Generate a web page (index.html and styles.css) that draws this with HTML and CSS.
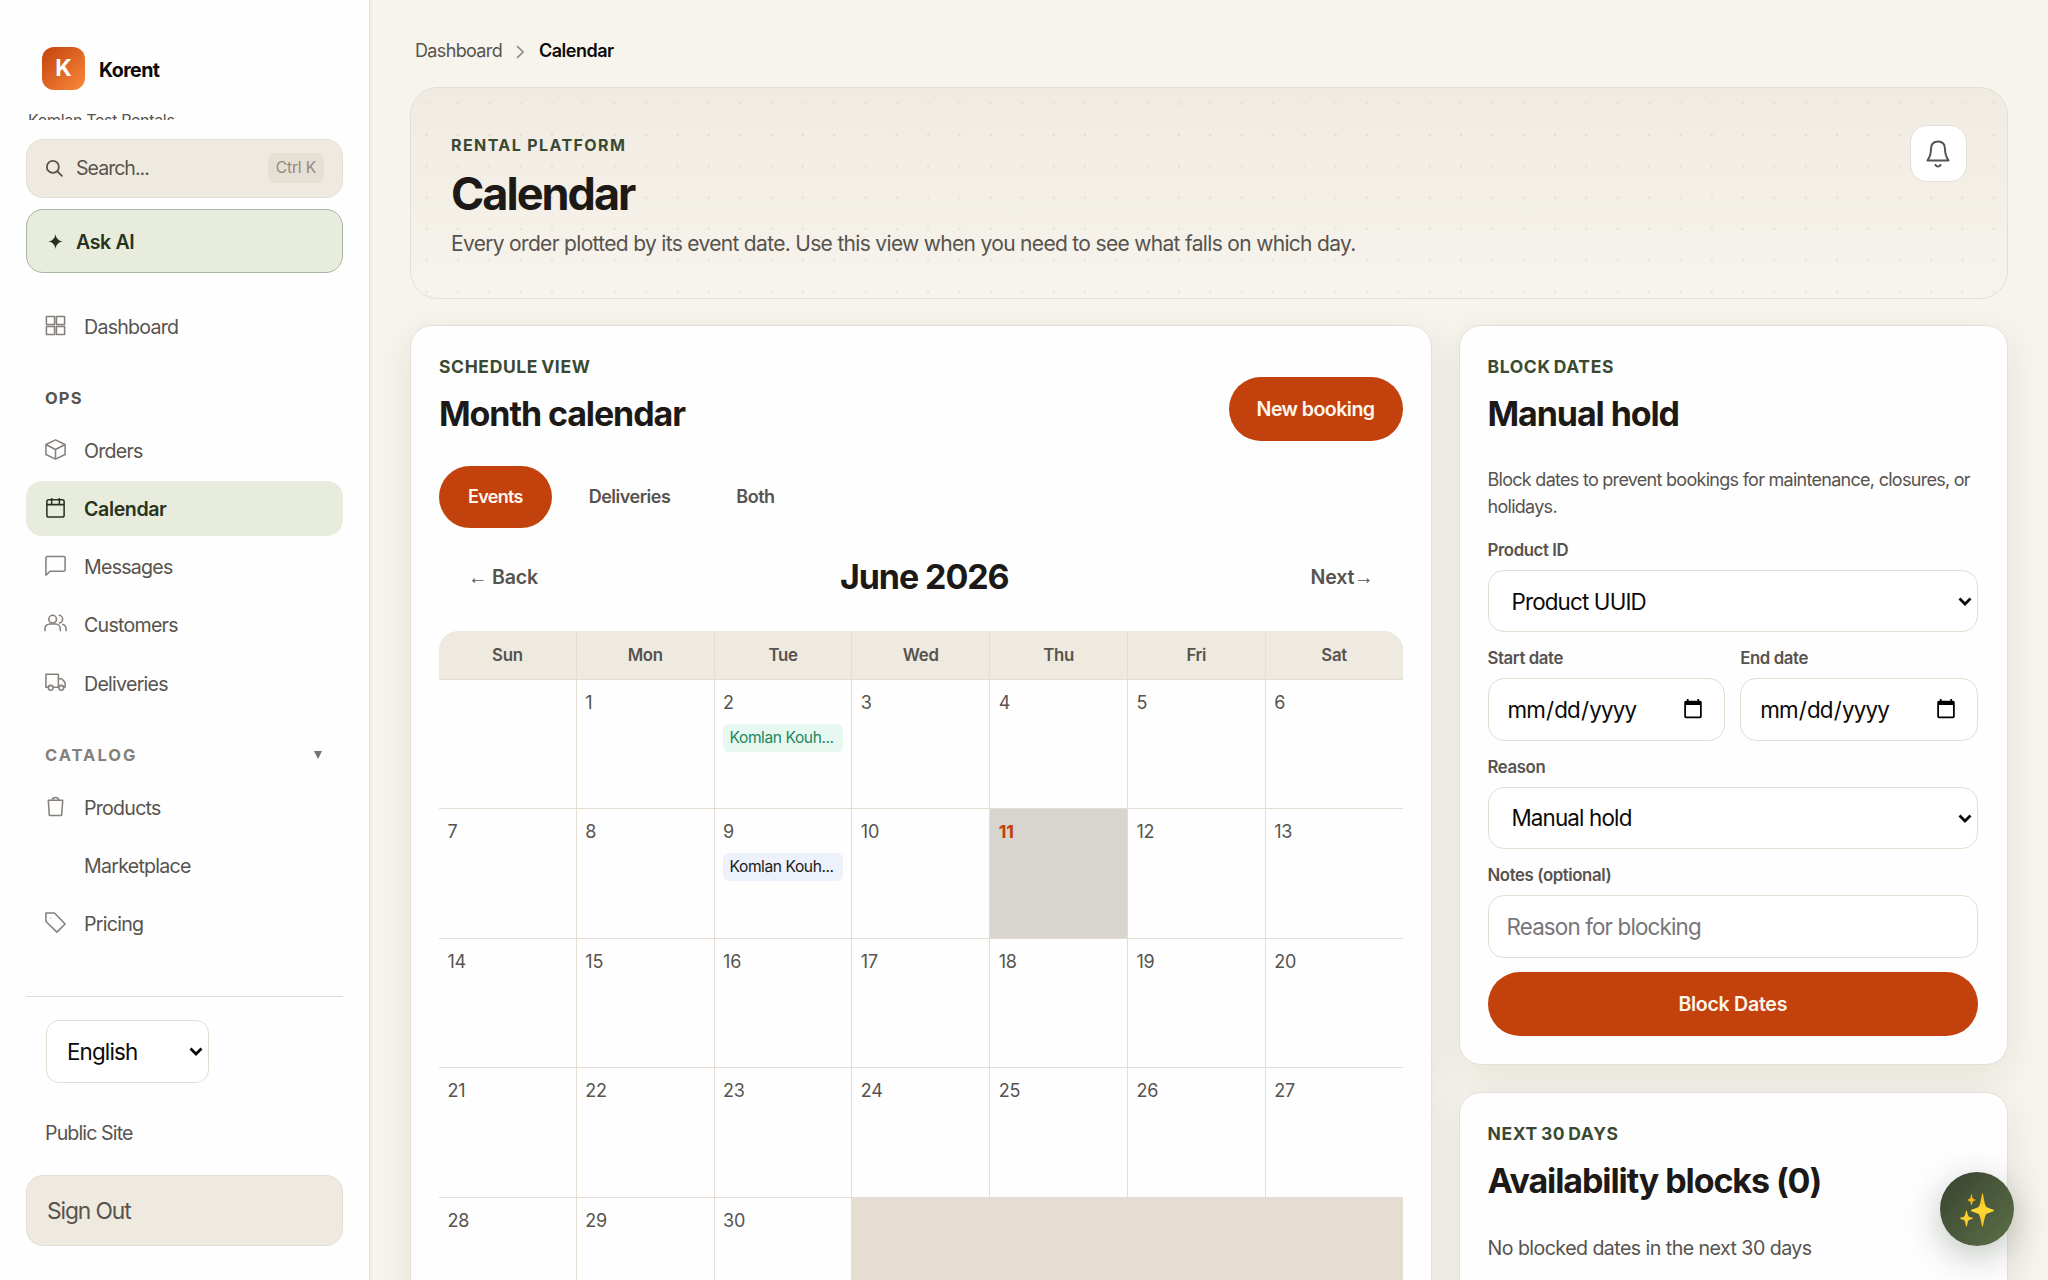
FILE: index.html
```html
<!DOCTYPE html>
<html lang="en">
<head>
  <meta charset="utf-8">
  <title>Calendar - Korent</title>
  <link rel="stylesheet" href="styles.css">
</head>
<body>
  <div class="app">
    <!-- Sidebar -->
    <aside class="sidebar">
      <div class="brand-block">
        <div class="brand">
          <span class="brand-logo">K</span>
          <span class="brand-name">Korent</span>
        </div>
        <div class="org-name">Komlan Test Rentals</div>
      </div>

      <button class="search">
        <svg class="search-icon" viewBox="0 0 24 24"><circle cx="10.5" cy="10.5" r="8"/><path d="M16.5 16.5L22.5 22.5"/></svg>
        <span>Search...</span>
        <kbd>Ctrl K</kbd>
      </button>
      <button class="ask-ai">
        <svg class="spark" viewBox="0 0 16 16"><path d="M8 0C8.6 4.6 11 7.3 16 8C11 8.7 8.6 11.4 8 16C7.4 11.4 5 8.7 0 8C5 7.3 7.4 4.6 8 0Z"/></svg>
        <span>Ask AI</span>
      </button>

      <nav class="nav">
        <a class="nav-item" href="#">
          <svg class="icon" viewBox="0 0 24 24"><path d="M2.500 2.500h8.500v8.500H2.500zM13 2.500h8.500v8.500H13zM2.500 13h8.500v8.500H2.500zM13 13h8.500v8.500H13z"/></svg>
          <span>Dashboard</span>
        </a>

        <div class="nav-title">Ops</div>
        <a class="nav-item" href="#">
          <svg class="icon" viewBox="0 0 24 24"><path d="M12 2l10 4.800v10.400L12 22l-10-4.800V6.800zM2 6.800L12 12l10-5.200M12 12v10"/></svg>
          <span>Orders</span>
        </a>
        <a class="nav-item active" href="#">
          <svg class="icon" viewBox="0 0 24 24"><rect x="3" y="4" width="18" height="18" rx="2"/><path d="M3 9h18M8 2v6M16 2v6"/></svg>
          <span>Calendar</span>
        </a>
        <a class="nav-item" href="#">
          <svg class="icon" viewBox="0 0 24 24"><path d="M3.500 2.500h17a1.500 1.500 0 0 1 1.500 1.500v12.500A1.500 1.500 0 0 1 20.500 18H6.500l-4.500 4V4A1.500 1.500 0 0 1 3.500 2.500z"/></svg>
          <span>Messages</span>
        </a>
        <a class="nav-item" href="#">
          <svg class="icon" viewBox="0 0 24 24"><circle cx="9" cy="7.500" r="4"/><path d="M1 20v-2.500a5 5 0 0 1 5-5h6a5 5 0 0 1 5 5V20M15.500 3.500a4 4 0 0 1 0 8M19 12.700a5 5 0 0 1 4 5V20"/></svg>
          <span>Customers</span>
        </a>
        <a class="nav-item" href="#">
          <svg class="icon" viewBox="0 0 24 24"><path d="M4.500 17H2V3.500h13V17H9.500M15 8h3.500l3.500 4v5h-1.500M15 17h.5"/><circle cx="7" cy="17.500" r="2.500"/><circle cx="18" cy="17.500" r="2.500"/></svg>
          <span>Deliveries</span>
        </a>

        <div class="nav-title collapsible">Catalog <svg class="caret" viewBox="0 0 8 8"><path d="M0 0h8L4 8z"/></svg></div>
        <a class="nav-item" href="#">
          <svg class="icon" viewBox="0 0 24 24"><path d="M4.500 5.500h15l-1 15a1 1 0 0 1-1 1h-11a1 1 0 0 1-1-1zM8.500 5.500C8.500 1.500 15.500 1.500 15.500 5.500"/></svg>
          <span>Products</span>
        </a>
        <a class="nav-item" href="#">
          <svg class="icon" viewBox="0 0 24 24"></svg>
          <span>Marketplace</span>
        </a>
        <a class="nav-item" href="#">
          <svg class="icon" viewBox="0 0 24 24"><path d="M2 2h9L22 13.500L13.500 22L2 11zM7 7.500h.6"/></svg>
          <span>Pricing</span>
        </a>
      </nav>

      <div class="sidebar-footer">
        <div class="select language">
          <select class="field"><option>English</option></select>
          <svg viewBox="0 0 14 10"><path d="M1.500 1.500L7 7l5.500-5.500"/></svg>
        </div>
        <a class="public-site" href="#">Public Site</a>
        <button class="sign-out">Sign Out</button>
      </div>
    </aside>

    <!-- Page content -->
    <main class="main">
      <div class="breadcrumb">
        <a href="#">Dashboard</a>
        <svg class="chevron" viewBox="0 0 8 14"><path d="M1 1l6 6-6 6"/></svg>
        <strong>Calendar</strong>
      </div>

      <header class="hero">
        <div>
          <div class="hero-eyebrow">Rental platform</div>
          <h1>Calendar</h1>
          <p>Every order plotted by its event date. Use this view when you need to see what falls on which day.</p>
        </div>
        <button class="bell">
          <svg viewBox="0 0 24 28"><path d="M12 1.500c-4.500 0-7 3-7 7.500 0 6-1.500 8.500-3.500 11.500h21c-2-3-3.500-5.500-3.500-11.500 0-4.500-2.500-7.500-7-7.500zM9.500 25c1 2 4 2 5 0"/></svg>
        </button>
      </header>

      <div class="columns">
        <section class="card">
          <div class="card-head">
            <div>
              <div class="eyebrow">Schedule view</div>
              <h2>Month calendar</h2>
            </div>
            <button class="btn booking">New booking</button>
          </div>

          <div class="tabs">
            <button class="tab selected">Events</button>
            <button class="tab">Deliveries</button>
            <button class="tab">Both</button>
          </div>

          <div class="month-nav">
            <button class="month-btn"><span class="arrow">←</span> Back</button>
            <h2>June 2026</h2>
            <button class="month-btn">Next<span class="arrow">→</span></button>
          </div>

          <div class="month">
            <div class="weekday">Sun</div>
            <div class="weekday">Mon</div>
            <div class="weekday">Tue</div>
            <div class="weekday">Wed</div>
            <div class="weekday">Thu</div>
            <div class="weekday">Fri</div>
            <div class="weekday">Sat</div>

            <div class="day"></div>
            <div class="day">1</div>
            <div class="day">2<div class="event confirmed">Komlan Kouh...</div></div>
            <div class="day">3</div>
            <div class="day">4</div>
            <div class="day">5</div>
            <div class="day">6</div>

            <div class="day">7</div>
            <div class="day">8</div>
            <div class="day">9<div class="event">Komlan Kouh...</div></div>
            <div class="day">10</div>
            <div class="day today">11</div>
            <div class="day">12</div>
            <div class="day">13</div>

            <div class="day">14</div>
            <div class="day">15</div>
            <div class="day">16</div>
            <div class="day">17</div>
            <div class="day">18</div>
            <div class="day">19</div>
            <div class="day">20</div>

            <div class="day">21</div>
            <div class="day">22</div>
            <div class="day">23</div>
            <div class="day">24</div>
            <div class="day">25</div>
            <div class="day">26</div>
            <div class="day">27</div>

            <div class="day">28</div>
            <div class="day">29</div>
            <div class="day">30</div>
          </div>
        </section>

        <div class="side">
          <section class="card">
            <div class="eyebrow">Block dates</div>
            <h2>Manual hold</h2>
            <p class="hint">Block dates to prevent bookings for maintenance, closures, or holidays.</p>

            <form class="hold-form">
              <label>Product ID
                <div class="select">
                  <select class="field"><option>Product UUID</option></select>
                  <svg viewBox="0 0 14 10"><path d="M1.500 1.500L7 7l5.500-5.500"/></svg>
                </div>
              </label>
              <div class="date-row">
                <label>Start date
                  <input class="field" type="date">
                </label>
                <label>End date
                  <input class="field" type="date">
                </label>
              </div>
              <label>Reason
                <div class="select">
                  <select class="field"><option>Manual hold</option></select>
                  <svg viewBox="0 0 14 10"><path d="M1.500 1.500L7 7l5.500-5.500"/></svg>
                </div>
              </label>
              <label>Notes (optional)
                <input class="field" type="text" placeholder="Reason for blocking">
              </label>
              <button class="btn" type="button">Block Dates</button>
            </form>
          </section>

          <section class="card">
            <div class="eyebrow">Next 30 days</div>
            <h2>Availability blocks (0)</h2>
            <p class="empty">No blocked dates in the next 30 days</p>
          </section>
        </div>
      </div>
    </main>
  </div>

  <!-- Floating assistant button -->
  <button class="fab">
    <svg viewBox="0 0 36 38">
      <defs>
        <linearGradient id="gold" x1="0" y1="0" x2="0" y2="1">
          <stop offset="0" stop-color="#f5b800"/>
          <stop offset="0.5" stop-color="#fdd835"/>
          <stop offset="1" stop-color="#f9c01c"/>
        </linearGradient>
      </defs>
      <path fill="url(#gold)" d="M23.500 2C24.300 2 25 12 27 15.500C29 17.500 35 18.200 35 19.500C35 20.800 29 21.500 27 23.500C25 27 24.300 36 23.500 36C22.700 36 22 27 20 23.500C18 21.500 12 20.800 12 19.500C12 18.200 18 17.500 20 15.500C22 12 22.700 2 23.500 2Z"/>
      <path fill="#fbcf30" d="M7.500 19.500C8.300 19.500 8.500 24 9.500 25.200C10.700 26.200 14 26.500 14 27.300C14 28.100 10.700 28.500 9.500 29.500C8.500 30.800 8.300 35.500 7.500 35.500C6.700 35.500 6.500 30.800 5.500 29.500C4.300 28.500 1 28.100 1 27.300C1 26.500 4.300 26.200 5.500 25.200C6.500 24 6.700 19.500 7.500 19.500Z"/>
      <path fill="#f2b51d" d="M12.500 3C13 3 13.200 6.500 14 7.500C14.800 8.200 16.500 8.300 16.500 9C16.500 9.700 14.800 9.800 14 10.500C13.200 11.500 13 14.500 12.500 14.500C12 14.500 11.800 11.500 11 10.500C10.200 9.800 8.500 9.700 8.500 9C8.500 8.300 10.200 8.200 11 7.500C11.800 6.500 12 3 12.500 3Z"/>
    </svg>
  </button>
</body>
</html>
```

FILE: styles.css
```css
* {
  box-sizing: border-box;
}

body {
  margin: 0;
  height: 1280px;
  overflow: hidden;
  font-family: Inter, "Liberation Sans", sans-serif;
  font-size: 19.6px;
  letter-spacing: -0.011em;
  color: #1c1917;
  background-color: #f7f4ed;
}

h1, h2, p {
  margin: 0;
}

a {
  color: inherit;
  text-decoration: none;
}

button {
  font: inherit;
  letter-spacing: inherit;
  border: none;
  cursor: pointer;
}

.app {
  display: flex;
  height: 1280px;
  overflow: hidden;
}

/* Sidebar */
.sidebar {
  display: flex;
  flex-direction: column;
  flex: none;
  width: 370px;
  height: 1280px;
  padding: 0 26px 34px;
  background-color: #fefefe;
  border-right: 1px solid #e5e0d6;
  box-shadow: 1px 0 3px rgba(60, 50, 30, 0.06);
}

.brand-block {
  flex: none;
  height: 120px;
  padding-top: 47px;
  overflow: hidden;
}

.brand {
  display: flex;
  align-items: center;
  gap: 14px;
  height: 43px;
  padding-left: 16px;
}

.brand-logo {
  width: 43px;
  height: 43px;
  border-radius: 12px;
  background: linear-gradient(135deg, #c2410c, #fb8a3c);
  color: #fff;
  font-size: 23px;
  font-weight: 700;
  line-height: 43px;
  text-align: center;
}

.brand-name {
  padding-top: 2px;
  color: #0c0a09;
  font-weight: 700;
  letter-spacing: -0.03em;
}

.org-name {
  margin-top: 18px;
  padding-left: 2px;
  color: #57534e;
  font-size: 16px;
  letter-spacing: -0.02em;
  line-height: 24px;
}

.search,
.ask-ai {
  display: flex;
  flex: none;
  align-items: center;
  width: 317px;
  padding: 0 18px;
  border-radius: 17px;
  text-align: left;
}

.search {
  height: 59px;
  margin-top: 19px;
  padding-bottom: 1px;
  border: 1px solid #e5dfd3;
  background-color: #efeae0;
  color: #57534e;
  letter-spacing: -0.052em;
}

.search-icon {
  width: 18px;
  height: 18px;
  margin-right: 13px;
  fill: none;
  stroke: #57534e;
  stroke-width: 2.4;
  stroke-linecap: round;
}

.search kbd {
  margin-left: auto;
  padding: 0 8px;
  border-radius: 8px;
  background-color: #e6dfd3;
  color: #8f8a84;
  font-family: inherit;
  font-size: 15.6px;
  letter-spacing: -0.011em;
  line-height: 30px;
}

.ask-ai {
  height: 64px;
  margin-top: 11px;
  padding: 1px 0 0 21px;
  border: 1px solid #a9b8a2;
  background-color: #e8ecdc;
  color: #28331f;
  font-weight: 600;
  letter-spacing: -0.02em;
}

.spark {
  width: 15px;
  height: 15px;
  margin-right: 13px;
  fill: #28331f;
}

.nav {
  margin-top: 26px;
}

.nav-item {
  display: flex;
  align-items: center;
  height: 55px;
  margin-bottom: 3.3px;
  padding-left: 18px;
  border-radius: 16px;
  color: #57534e;
  letter-spacing: -0.038em;
}

.nav-item.active {
  background-color: #e8ecdc;
  color: #28331f;
  font-weight: 600;
  letter-spacing: -0.02em;
}

.icon {
  width: 23px;
  height: 23px;
  margin: -3px 17px 0 0;
  fill: none;
  stroke: #85807a;
  stroke-width: 1.6;
  stroke-linejoin: round;
}

.active .icon {
  stroke: #28331f;
}

.nav-title {
  display: flex;
  align-items: center;
  justify-content: space-between;
  height: 20px;
  margin: 34px 20px 15px 19px;
  color: #57534e;
  font-size: 16.5px;
  font-weight: 700;
  letter-spacing: 0.07em;
  text-transform: uppercase;
}

.nav-title.collapsible {
  color: #85807a;
  letter-spacing: 0.12em;
}

.caret {
  width: 8px;
  height: 8px;
  margin-right: 1px;
  fill: #78716c;
}

.sidebar-footer {
  display: flex;
  flex-direction: column;
  align-items: flex-start;
  margin-top: auto;
  padding-top: 23px;
  border-top: 1px solid #e2ddd3;
}

.field {
  display: block;
  width: 100%;
  height: 62.6px;
  padding: 0 18px;
  border: 1px solid #e2ddd0;
  border-radius: 16px;
  background-color: #fff;
  color: #0c0a09;
  font-family: inherit;
  font-size: 22.4px;
  font-weight: 400;
  letter-spacing: -0.038em;
}

.field::placeholder {
  color: #78757a;
}

/* Select with its own arrow */
.select {
  position: relative;
}

.select .field {
  padding: 0 23px;
  appearance: none;
}

.select svg {
  position: absolute;
  top: 27px;
  right: 6px;
  width: 14px;
  height: 10px;
  fill: none;
  stroke: #0c0a09;
  stroke-width: 2.8;
  pointer-events: none;
}

.language {
  width: 163px;
  margin-left: 20px;
}

.language .field {
  padding: 0 20px;
  border-radius: 13px;
}

.public-site {
  height: 40px;
  margin: 30px 0 22px 19px;
  color: #57534e;
  letter-spacing: -0.045em;
  line-height: 40px;
}

.sign-out {
  width: 317px;
  height: 71px;
  padding: 0 20px;
  border: 1px solid #e5dfd3;
  border-radius: 17px;
  background-color: #efeae0;
  color: #57534e;
  font-size: 22.8px;
  letter-spacing: -0.048em;
  text-align: left;
}

/* Main area */
.main {
  flex: 1;
  padding: 0 40px;
}

.breadcrumb {
  display: flex;
  align-items: center;
  height: 87px;
  padding: 14px 0 0 5px;
  color: #57534e;
  font-size: 18px;
  letter-spacing: -0.036em;
}

.breadcrumb strong {
  color: #0c0a09;
  font-weight: 600;
  letter-spacing: -0.028em;
}

.chevron {
  width: 8px;
  height: 14px;
  margin: 2px 15px 0 14px;
  fill: none;
  stroke: #8f8a84;
  stroke-width: 1.6;
}

.hero {
  display: flex;
  justify-content: space-between;
  height: 211.5px;
  padding: 38px 40px 0;
  border: 1px solid #e4dfd5;
  border-radius: 28px;
  background-image:
    radial-gradient(circle, rgba(60, 50, 30, 0.08) 1.3px, transparent 1.6px),
    linear-gradient(#f0ebe2, #f7f4ed);
  background-size: 31.35px 31.35px, auto;
}

.hero-eyebrow {
  margin-top: 9px;
  color: #3a4a32;
  font-size: 16px;
  font-weight: 700;
  letter-spacing: 0.088em;
  line-height: 20px;
  text-transform: uppercase;
}

.hero h1 {
  margin-top: 12px;
  font-size: 45px;
  font-weight: 700;
  letter-spacing: -0.044em;
  line-height: 54px;
}

.hero p {
  margin-top: 7px;
  color: #57534e;
  font-size: 21px;
  letter-spacing: -0.0325em;
  line-height: 32px;
}

.bell {
  width: 57px;
  height: 57px;
  margin-top: -1px;
  padding: 14px 15px;
  border: 1px solid #e5dfd3;
  border-radius: 17px;
  background-color: #fff;
}

.bell svg {
  display: block;
  width: 24px;
  height: 28px;
  fill: none;
  stroke: #57534e;
  stroke-width: 2;
  stroke-linejoin: round;
  stroke-linecap: round;
}

.columns {
  display: grid;
  grid-template-columns: 1021.5px 549.5px;
  gap: 27px;
  align-items: start;
  margin-top: 26px;
}

.side {
  display: grid;
  gap: 27px;
}

.card {
  padding: 28px;
  border: 1px solid #e5e0d6;
  border-radius: 22px;
  background-color: #fefefe;
  box-shadow: 0 10px 40px rgba(40, 30, 15, 0.085);
}

.side .card {
  padding-right: 29px;
}

.eyebrow {
  color: #3a4a32;
  font-size: 17.5px;
  font-weight: 700;
  letter-spacing: 0.036em;
  word-spacing: -0.1em;
  line-height: 25px;
  text-transform: uppercase;
}

h2 {
  font-size: 34px;
  font-weight: 700;
  letter-spacing: -0.032em;
  line-height: 44px;
}

.eyebrow + h2 {
  margin-top: 13px;
}

.card-head {
  display: flex;
  align-items: flex-end;
  justify-content: space-between;
  height: 87px;
}

.card-head h2 {
  margin-bottom: 5px;
}

.btn {
  height: 64px;
  padding: 0 28px;
  border-radius: 32px;
  background-color: #c2410c;
  color: #fff7ed;
  font-weight: 600;
  letter-spacing: -0.015em;
}

.btn.booking {
  letter-spacing: -0.029em;
}

.tabs {
  display: flex;
  gap: 8px;
  margin-top: 25px;
}

.tab {
  height: 62px;
  padding: 0 29px;
  border-radius: 31px;
  background: none;
  color: #57534e;
  font-size: 18px;
  font-weight: 600;
  letter-spacing: -0.027em;
}

.tab.selected {
  background-color: #c2410c;
  color: #fff7ed;
  letter-spacing: -0.039em;
}

.month-nav {
  display: flex;
  align-items: center;
  justify-content: space-between;
  margin-top: 18px;
}

.month-btn {
  height: 62px;
  padding: 0 29px;
  background: none;
  color: #57534e;
  font-weight: 600;
}

.arrow {
  font-family: "Liberation Sans", sans-serif;
  font-weight: 400;
}

/* Month grid, the gaps show the background as lines */
.month {
  display: grid;
  grid-template-columns: repeat(7, minmax(0, 1fr));
  grid-template-rows: 48.6px;
  grid-auto-rows: 128.4px;
  gap: 1px;
  height: 777px;
  margin-top: 23px;
  border-radius: 20px;
  background-color: #e5ddd2;
  overflow: hidden;
}

.weekday {
  background-color: #efeae0;
  color: #57534e;
  font-size: 16.8px;
  font-weight: 600;
  letter-spacing: -0.018em;
  line-height: 48px;
  text-align: center;
}

.day {
  padding: 10px 8.500px;
  background-color: #fefefe;
  color: #57534e;
  font-size: 18px;
  line-height: 25px;
}

.day.today {
  background-color: #d8d4cf;
  color: #c2410c;
  font-weight: 700;
}

.event {
  margin-top: 9px;
  padding: 0 6.500px;
  border-radius: 6px;
  background-color: #edf1fc;
  color: #1c1917;
  font-size: 15.6px;
  letter-spacing: -0.028em;
  line-height: 28px;
  white-space: nowrap;
}

.event.confirmed {
  background-color: #e7f8f1;
  color: #23875c;
}

/* Right column */
.hint {
  margin-top: 30px;
  color: #57534e;
  font-size: 18px;
  letter-spacing: -0.04em;
  line-height: 27px;
}

.hold-form {
  display: grid;
  gap: 14px;
  margin-top: 18.5px;
}

.hold-form label {
  color: #57534e;
  font-size: 16.8px;
  font-weight: 600;
  letter-spacing: -0.024em;
  line-height: 25.3px;
}

.hold-form label > .field,
.hold-form .select {
  margin-top: 6.500px;
}

.date-row {
  display: grid;
  grid-template-columns: 1fr 1fr;
  gap: 15px;
}

.empty {
  min-height: 60px;
  margin-top: 29px;
  color: #57534e;
  letter-spacing: -0.028em;
  line-height: 32px;
}

.fab {
  position: fixed;
  right: 34px;
  bottom: 34px;
  width: 74px;
  height: 74px;
  padding: 19px;
  border-radius: 50%;
  background: linear-gradient(135deg, #38432f, #5c6f48);
  box-shadow: 0 10px 36px rgba(30, 45, 30, 0.28);
}

.fab svg {
  display: block;
  width: 36px;
  height: 38px;
}
```
